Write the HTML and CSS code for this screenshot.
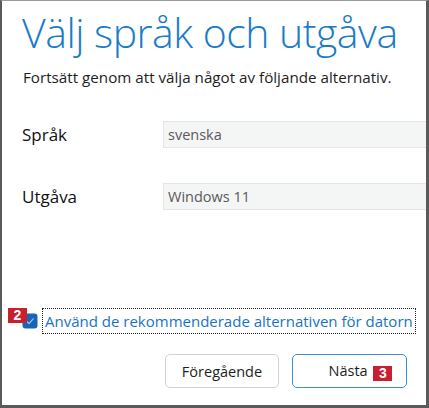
FILE: index.html
```html
<!DOCTYPE html>
<html lang="sv">
<head>
<meta charset="utf-8">
<link rel="stylesheet" href="styles.css">
</head>
<body>
<div class="window">
  <div class="content">
    <h1 class="title">Välj språk och utgåva</h1>
    <p class="subtitle">Fortsätt genom att välja något av följande alternativ.</p>
    <div class="fields">
      <div class="label">Språk</div>
      <div class="input">svenska</div>
      <div class="label">Utgåva</div>
      <div class="input">Windows 11</div>
    </div>
  </div>
  <div class="spacer"></div>
  <div class="check-row">
    <span class="checkbox">
      <svg width="16" height="16" viewBox="0 0 16 16"><rect x="0.5" y="0.5" width="15" height="15" rx="3" fill="#1565b8"/><path d="M5 8.6 L7 10.6 L11.2 5.8" fill="none" stroke="#9cc7ee" stroke-width="1.2" stroke-linecap="round" stroke-linejoin="round"/></svg>
      <span class="badge badge-2">2</span>
    </span>
    <span class="check-label">Använd de rekommenderade alternativen för datorn</span>
  </div>
  <div class="buttons">
    <button class="btn">Föregående</button>
    <button class="btn btn-primary">Nästa <span class="badge badge-3">3</span></button>
  </div>
</div>
</body>
</html>
```

FILE: styles.css
```css
html, body {
  margin: 0;
  padding: 0;
  background: #ffffff;
}
.window {
  box-sizing: border-box;
  width: 429px;
  height: 408px;
  border-top: 1px solid #9a9a9a;
  border-left: 2px solid #5a5a5a;
  border-right: 3px solid #5a5a5a;
  border-bottom: 3px solid #5a5a5a;
  background: #fff;
  display: flex;
  flex-direction: column;
  overflow: hidden;
  font-family: "Open Sans", "Noto Sans", sans-serif;
  color: #1e1e1e;
}
.content {
  padding: 5px 0 0 20px;
}
.title {
  margin: 0;
  font-family: "Open Sans", sans-serif;
  font-weight: 300;
  font-size: 41px;
  line-height: 52px;
  color: #1a7cc6;
  letter-spacing: -0.5px;
  white-space: nowrap;
}
.subtitle {
  margin: 9px 0 0 1px;
  font-size: 15.2px;
  line-height: 20px;
  color: #1e1e1e;
  white-space: nowrap;
}
.fields {
  margin-top: 34px;
  display: grid;
  grid-template-columns: 141px 1fr;
  row-gap: 35px;
  align-items: center;
}
.label {
  font-size: 17px;
  line-height: 27px;
  color: #111;
}
.input {
  box-sizing: border-box;
  height: 27px;
  margin-right: -4px;
  padding: 0 4px;
  background: #f4f5f5;
  border: 1px solid #e4e6e6;
  border-right: none;
  font-size: 14.5px;
  line-height: 25px;
  color: #5a5a5a;
}
.spacer {
  flex: 1;
}
.check-row {
  display: flex;
  align-items: center;
  padding-left: 20px;
  gap: 5px;
}
.checkbox {
  position: relative;
  display: block;
  width: 16px;
  height: 16px;
}
.checkbox svg {
  display: block;
}
.badge {
  display: inline-block;
  background: #c9202f;
  color: #fff;
  font-family: "Liberation Sans", Arial, sans-serif;
  font-weight: bold;
  font-size: 14px;
  line-height: 15px;
  text-align: center;
}
.badge-2 {
  position: absolute;
  left: -14px;
  top: -5px;
  width: 19px;
  height: 15px;
}
.badge-3 {
  width: 19px;
  height: 15px;
  vertical-align: -2px;
  margin-left: 2px;
}
.check-label {
  font-size: 15px;
  line-height: 24px;
  color: #1b74c0;
  outline: 1px dotted #222;
  outline-offset: 0;
  padding: 0 2px;
  white-space: nowrap;
}
.buttons {
  display: flex;
  justify-content: flex-end;
  gap: 13px;
  padding: 21px 19px 17px 0;
}
.btn {
  box-sizing: border-box;
  width: 114px;
  height: 34px;
  background: #fff;
  border: 1px solid #d2d2d2;
  border-radius: 5px;
  font-family: "Open Sans", sans-serif;
  font-size: 14.5px;
  color: #1e1e1e;
  padding: 0;
}
.btn-primary {
  width: 115px;
  border-color: #3a8fd6;
  padding-left: 22px;
}
```
